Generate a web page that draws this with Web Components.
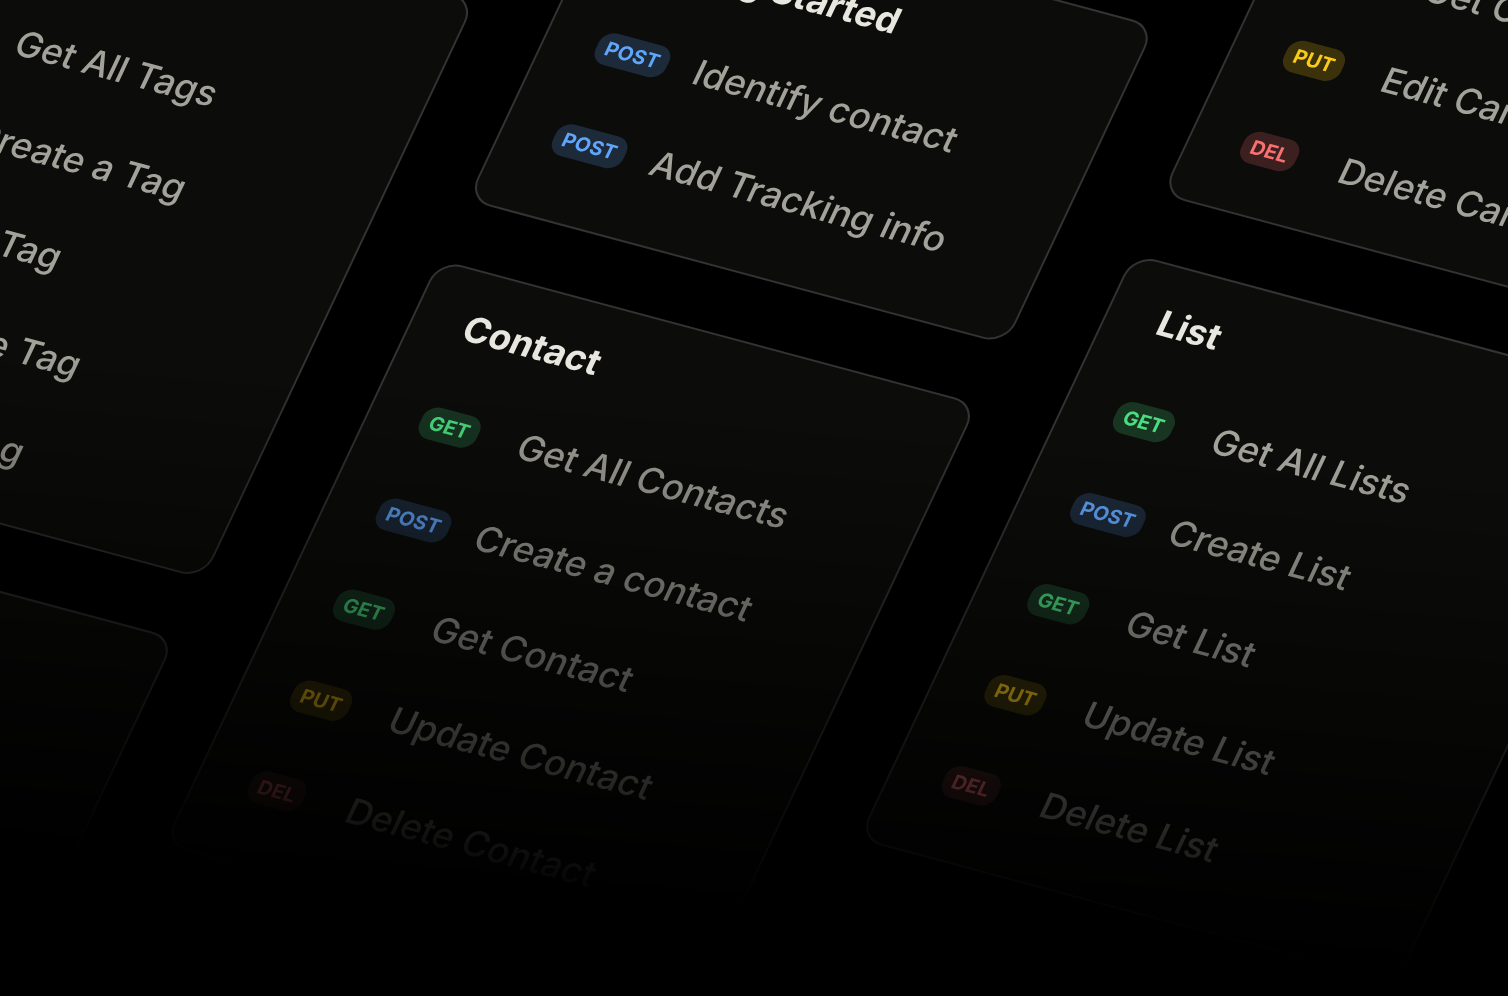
<!DOCTYPE html>
<html lang="en">
<head>
<meta charset="utf-8">
<meta name="viewport" content="width=device-width, initial-scale=1">
<title>API reference</title>
<style>
  html { background: #000; }
  body { margin: 0; font-family: Inter, "Liberation Sans", sans-serif; }
</style>
</head>
<body>
<api-board>
  <api-column style="--drop: 427px">
    <api-card heading="Tags" class="snug">
      <api-endpoint method="get">Get All Tags</api-endpoint>
      <api-endpoint method="post">Create a Tag</api-endpoint>
      <api-endpoint method="get">Get Tag</api-endpoint>
      <api-endpoint method="put">Update Tag</api-endpoint>
      <api-endpoint method="del">Delete Tag</api-endpoint>
    </api-card>
    <api-card heading="Form">
      <api-endpoint method="get">Get Form</api-endpoint>
      <api-endpoint method="put">Edit Form</api-endpoint>
      <api-endpoint method="del">Delete Form</api-endpoint>
    </api-card>
  </api-column>
  <api-column style="--drop: 276px">
    <api-card heading="Getting Started" class="roomy">
      <api-endpoint method="post">Identify contact</api-endpoint>
      <api-endpoint method="post">Add Tracking info</api-endpoint>
    </api-card>
    <api-card heading="Contact">
      <api-endpoint method="get">Get All Contacts</api-endpoint>
      <api-endpoint method="post">Create a contact</api-endpoint>
      <api-endpoint method="get">Get Contact</api-endpoint>
      <api-endpoint method="put">Update Contact</api-endpoint>
      <api-endpoint method="del">Delete Contact</api-endpoint>
    </api-card>
  </api-column>
  <api-column style="--drop: 10px">
    <api-card heading="Campaign" class="tight">
      <api-endpoint method="get">Get Campaign</api-endpoint>
      <api-endpoint method="put">Edit Campaign</api-endpoint>
      <api-endpoint method="del">Delete Campaign</api-endpoint>
    </api-card>
    <api-card heading="List">
      <api-endpoint method="get">Get All Lists</api-endpoint>
      <api-endpoint method="post">Create List</api-endpoint>
      <api-endpoint method="get">Get List</api-endpoint>
      <api-endpoint method="put">Update List</api-endpoint>
      <api-endpoint method="del">Delete List</api-endpoint>
    </api-card>
  </api-column>
</api-board>

<template id="board">
  <style>
    /* A tilted plane of cards that fades into black towards the bottom. */
    :host {
      display: block;
      height: 100vh;
      overflow: hidden;
      background: #000;
      -webkit-mask-image: linear-gradient(185deg, #000 42%, transparent 87%);
      mask-image: linear-gradient(185deg, #000 42%, transparent 87%);
    }
    .plane {
      display: flex;
      align-items: flex-start;
      gap: 78px;
      width: max-content;
      transform-origin: 0 0;
      transform: translate(122px, -537px) rotate(15deg) skewX(-10.2deg);
    }
  </style>
  <main class="plane"><slot></slot></main>
</template>

<template id="column">
  <style>
    :host {
      display: flex;
      flex-direction: column;
      gap: 64px;
      width: 558px;
      padding-top: var(--drop, 0);
    }
  </style>
  <slot></slot>
</template>

<template id="card">
  <style>
    :host {
      display: block;
      box-sizing: border-box;
      padding: 36px 51px 58px;
      border: 2px solid #333;
      border-radius: 24px;
      background: #0c0c0a;
    }
    :host(.tight) { padding-bottom: 47px; }
    :host(.snug) { padding-bottom: 51px; }
    :host(.roomy) { padding-top: 40px; padding-bottom: 61px; }
    section { display: flex; flex-direction: column; gap: 57px; }
    h2 {
      margin: 0;
      font-size: 36px;
      line-height: 43px;
      font-weight: 700;
      color: #e8e7df;
    }
    .list { display: flex; flex-direction: column; gap: 56px; }
  </style>
  <section aria-labelledby="heading">
    <h2 id="heading"></h2>
    <div class="list" role="list"><slot></slot></div>
  </section>
</template>

<template id="endpoint">
  <style>
    :host {
      display: grid;
      grid-template-columns: 101px 1fr;
      align-items: center;
      font-size: 36px;
      line-height: 43px;
      font-weight: 500;
      color: #a3a29a;
      white-space: nowrap;
      --tone: 74 222 128;
    }
    :host([method="post"]) { --tone: 96 165 250; }
    :host([method="put"]) { --tone: 250 204 21; }
    :host([method="del"]) { --tone: 248 113 113; }
    .method {
      justify-self: start;
      padding: 0 9px;
      border-radius: 14px;
      font-size: 20px;
      line-height: 34px;
      font-weight: 700;
      color: rgb(var(--tone));
      background: rgb(var(--tone) / 0.2);
    }
  </style>
  <span class="method"></span>
  <span class="name"><slot></slot></span>
</template>

<script>
  class TemplateElement extends HTMLElement {
    constructor(id) {
      super();
      this.attachShadow({ mode: "open" })
        .append(document.getElementById(id).content.cloneNode(true));
    }
  }

  class ApiBoard extends TemplateElement {
    constructor() { super("board"); }
  }

  class ApiColumn extends TemplateElement {
    constructor() { super("column"); }
  }

  class ApiCard extends TemplateElement {
    constructor() { super("card"); }
    connectedCallback() {
      this.shadowRoot.querySelector("h2").textContent = this.getAttribute("heading");
    }
  }

  class ApiEndpoint extends TemplateElement {
    constructor() { super("endpoint"); }
    connectedCallback() {
      this.setAttribute("role", "listitem");
      this.shadowRoot.querySelector(".method").textContent =
        this.getAttribute("method").toUpperCase();
    }
  }

  customElements.define("api-board", ApiBoard);
  customElements.define("api-column", ApiColumn);
  customElements.define("api-card", ApiCard);
  customElements.define("api-endpoint", ApiEndpoint);
</script>
</body>
</html>
